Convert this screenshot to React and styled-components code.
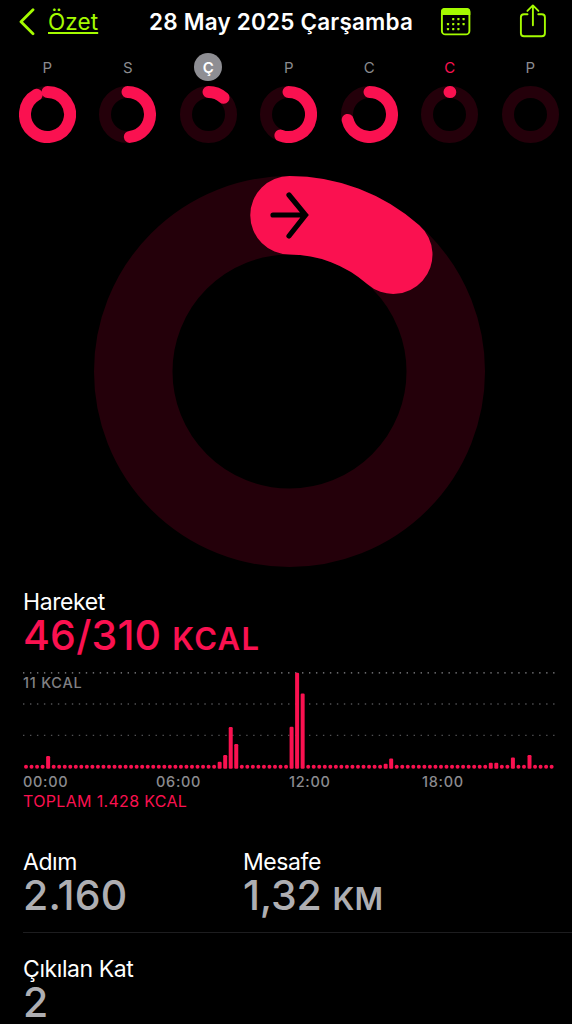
import React from "react";
import styled, { createGlobalStyle } from "styled-components";

const PINK = "#fa1150";
const TRACK = "#24000a";
const LIME = "#a5fb00";

const GlobalStyle = createGlobalStyle`
  body {
    margin: 0;
    background: #000;
    color: #fff;
    font-family: Inter, "Noto Sans", sans-serif;
  }
`;

const Screen = styled.div`
  width: 572px;
  height: 1024px;
  overflow: hidden;
  background: #000;
  display: flex;
  flex-direction: column;
`;

const Header = styled.header`
  height: 43px;
  flex: none;
  display: flex;
  align-items: center;
  padding-left: 18px;
  box-sizing: border-box;
`;

const BackLink = styled.div`
  width: 131px;
  display: flex;
  align-items: center;
  gap: 13px;
  color: ${LIME};
  font-size: 22.5px;
  line-height: 26px;
`;

const BackText = styled.span`
  letter-spacing: 0.1px;
  text-decoration: underline;
  text-decoration-thickness: 2px;
  text-underline-offset: 2px;
`;

const Title = styled.h1`
  width: 291px;
  margin: 0;
  font-size: 22.5px;
  line-height: 26px;
  font-weight: 600;
  letter-spacing: 0.2px;
  white-space: nowrap;
`;

const Actions = styled.div`
  display: flex;
  gap: 48px;
`;

const Week = styled.div`
  display: flex;
  flex: none;
  height: 101px;
  padding: 10px 0 0 7px;
  box-sizing: border-box;
`;

const Day = styled.div`
  width: 80.5px;
  display: flex;
  flex-direction: column;
  align-items: center;
  gap: 5px;
`;

const DayLabel = styled.div`
  width: 28px;
  height: 28px;
  border-radius: 50%;
  font-size: 15px;
  line-height: 29px;
  text-align: center;
  font-weight: ${(p) => (p.$selected ? 600 : 400)};
  background: ${(p) => (p.$selected ? "#8e8e93" : "transparent")};
  color: ${(p) => (p.$selected ? "#fff" : p.$today ? PINK : "#8b8b8f")};
`;

const BigRing = styled.div`
  flex: none;
  height: 392px;
  padding: 32px 0 0 93.5px;
`;

const Move = styled.section`
  flex: none;
  height: 243px;
  padding: 20px 0 0 23px;
`;

const Label = styled.div`
  font-size: 23px;
  line-height: 28px;
  letter-spacing: -0.42px;
`;

const Value = styled.div`
  font-size: 41px;
  line-height: 38px;
  font-weight: 500;
  letter-spacing: ${(p) => p.$spacing || "0.2px"};
  color: ${(p) => p.$color || "#aeaeb2"};
  white-space: nowrap;
`;

const Unit = styled.span`
  font-size: 31px;
  font-weight: 600;
  margin-left: 11px;
  letter-spacing: ${(p) => p.$spacing || "0"};
`;

const Chart = styled.div`
  display: grid;
  height: 100px;
  width: 534px;
  margin-top: 14px;

  > * {
    grid-area: 1 / 1;
  }
`;

const ChartMax = styled.div`
  font-size: 14.5px;
  line-height: 18px;
  margin-top: 2px;
  font-weight: 500;
  letter-spacing: 0.75px;
  color: #808084;
`;

const Axis = styled.div`
  display: grid;
  grid-template-columns: repeat(4, 133px);
  font-size: 14.5px;
  line-height: 19px;
  font-weight: 500;
  letter-spacing: 0.7px;
  color: #8b8b8f;
`;

const Total = styled.div`
  font-size: 16px;
  line-height: 20px;
  color: ${PINK};
  letter-spacing: 0.33px;
`;

const Stats = styled.section`
  flex: none;
  display: grid;
  grid-template-columns: 220px 1fr;
  height: ${(p) => p.$height};
  margin-left: 23px;
  padding-top: ${(p) => p.$top};
  box-sizing: border-box;
  border-bottom: 1px solid ${(p) => (p.$last ? "transparent" : "#1d1d1f")};
`;

const week = [
  { name: "P", angle: 331 },
  { name: "S", angle: 174 },
  { name: "Ç", angle: 42, selected: true },
  { name: "P", angle: 201 },
  { name: "C", angle: 256 },
  { name: "C", angle: 2, today: true },
  { name: "P", angle: 0 },
];

// quarter-hour bars that stand above the idle dots: index -> height
const peaks = {
  4: 12.7,
  35: 7,
  36: 13.7,
  37: 41.7,
  38: 24.7,
  48: 42,
  49: 96,
  50: 75.3,
  65: 5,
  66: 10.3,
  84: 6,
  85: 6,
  88: 11.3,
  91: 13.7,
};

const Ring = ({ size, stroke, angle, children }) => {
  const c = size / 2;
  const r = (size - stroke) / 2;
  const a = (angle * Math.PI) / 180;
  const x = c + r * Math.sin(a);
  const y = c - r * Math.cos(a);
  return (
    <svg width={size} height={size} viewBox={`0 0 ${size} ${size}`} fill="none">
      <circle cx={c} cy={c} r={r} stroke={TRACK} strokeWidth={stroke} />
      {angle > 0 && (
        <path
          d={`M${c} ${c - r}A${r} ${r} 0 ${angle > 180 ? 1 : 0} 1 ${x} ${y}`}
          stroke={PINK}
          strokeWidth={stroke}
          strokeLinecap="round"
        />
      )}
      {children}
    </svg>
  );
};

const BackIcon = () => (
  <svg width="17" height="28" fill="none" stroke={LIME} strokeWidth="2.8">
    <path d="M15 1.8L3 13.7L15 25.7" strokeLinecap="round" strokeLinejoin="round" />
  </svg>
);

const CalendarIcon = () => (
  <svg width="31" height="34" viewBox="0 0 31 34" fill="none">
    <rect x="1.9" y="5" width="27.5" height="25.4" rx="3.5" stroke={LIME} strokeWidth="1.9" />
    <path d="M1 11V7.5Q1 4 4.5 4H26.8Q30.3 4 30.3 7.5V11Z" fill={LIME} />
    <g fill={LIME}>
      {[
        [12.2, 14],
        [17.4, 14],
        [22.6, 14],
        [7, 19],
        [12.2, 19],
        [17.4, 19],
        [22.6, 19],
        [7, 24],
        [12.2, 24],
        [17.4, 24],
      ].map(([x, y]) => (
        <rect key={`${x}-${y}`} x={x - 0.1} y={y} width="2.2" height="2.2" rx="0.4" />
      ))}
    </g>
  </svg>
);

const ShareIcon = () => (
  <svg
    width="28"
    height="36"
    viewBox="0 0.8 28 36"
    fill="none"
    stroke={LIME}
    strokeWidth="1.9"
    strokeLinecap="round"
    strokeLinejoin="round"
  >
    <path d="M8.5 11H5Q1.9 11 1.9 14V30Q1.9 33 5 33H22.8Q25.9 33 25.9 30V14Q25.9 11 22.8 11H19.3" />
    <path d="M13.9 22V2.2M8.4 7.7L13.9 2.2L19.4 7.7" />
  </svg>
);

const Bars = () => (
  <svg width="534" height="100">
    {[0.9, 32, 63.4].map((y, i) => (
      <line
        key={y}
        x1="0"
        x2="532"
        y1={y}
        y2={y}
        stroke={i === 0 ? "#8a8a8e" : "#505053"}
        strokeWidth="1.4"
        strokeDasharray="1.4 5.575"
      />
    ))}
    {Array.from({ length: 96 }, (_, i) => {
      const h = peaks[i] || 4;
      return <rect key={i} x={1 + i * 5.533} y={96.8 - h} width="4" height={h} rx={h > 4 ? 1.2 : 2} fill={PINK} />;
    })}
  </svg>
);

const App = () => {
  return (
    <Screen>
      <GlobalStyle />
      <Header>
        <BackLink>
          <BackIcon />
          <BackText>Özet</BackText>
        </BackLink>
        <Title>28 May 2025 Çarşamba</Title>
        <Actions>
          <CalendarIcon />
          <ShareIcon />
        </Actions>
      </Header>
      <Week>
        {week.map((day, i) => (
          <Day key={i}>
            <DayLabel $selected={day.selected} $today={day.today}>
              {day.name}
            </DayLabel>
            <Ring size={57} stroke={12} angle={day.angle} />
          </Day>
        ))}
      </Week>
      <BigRing>
        <Ring size={391} stroke={78.5} angle={41.6}>
          <path
            d="M179 39H210M195 19L211.5 39L195 60"
            stroke="#000"
            strokeWidth="5.2"
            strokeLinecap="round"
            strokeLinejoin="miter"
          />
        </Ring>
      </BigRing>
      <Move>
        <Label>Hareket</Label>
        <Value $color={PINK}>
          46/310<Unit $spacing="1.3px">KCAL</Unit>
        </Value>
        <Chart>
          <Bars />
          <ChartMax>11 KCAL</ChartMax>
        </Chart>
        <Axis>
          <span>00:00</span>
          <span>06:00</span>
          <span>12:00</span>
          <span>18:00</span>
        </Axis>
        <Total>TOPLAM 1.428 KCAL</Total>
      </Move>
      <Stats $height="102px" $top="17px">
        <div>
          <Label>Adım</Label>
          <Value>2.160</Value>
        </div>
        <div>
          <Label>Mesafe</Label>
          <Value $spacing="-0.2px">
            1,32<Unit>KM</Unit>
          </Value>
        </div>
      </Stats>
      <Stats $height="110px" $top="22px" $last>
        <div>
          <Label>Çıkılan Kat</Label>
          <Value>2</Value>
        </div>
      </Stats>
    </Screen>
  );
};

export default App;
